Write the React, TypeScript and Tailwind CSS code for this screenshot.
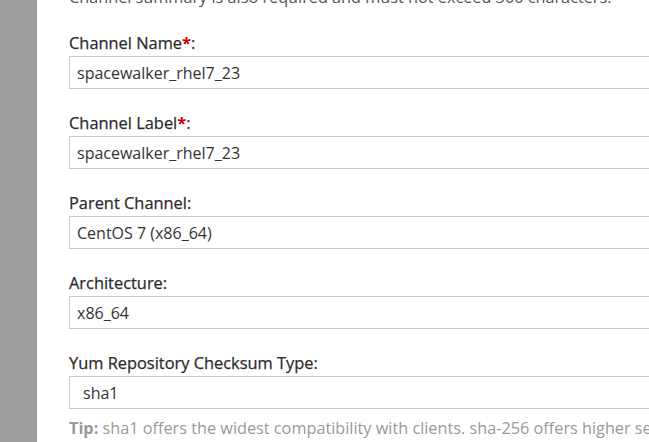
import React from "react";

function Label({ text, required }: { text: string; required?: boolean }) {
  return (
    <div className="text-[16.4px] leading-[20px] text-[#2b2b2b] mb-[3px] whitespace-nowrap [-webkit-text-stroke:0.25px_#2b2b2b]">
      {text}
      {required && <span className="text-[#c00] font-bold [-webkit-text-stroke:0px]">*</span>}:
    </div>
  );
}

function Field({ label, required, value }: { label: string; required?: boolean; value: string }) {
  return (
    <div className="mb-[24px]">
      <Label text={label} required={required} />
      <div className="h-[33px] w-[700px] border border-[#c8c8c8] bg-white flex items-center text-[16px] text-[#333] pl-[7px]">
        {value}
      </div>
    </div>
  );
}

export default function App() {
  return (
    <div className="w-[649px] h-[442px] overflow-hidden flex bg-white" style={{ fontFamily: '"Open Sans", sans-serif' }}>
      <div className="w-[37px] shrink-0 bg-[#9e9e9e]" />
      <div className="flex-1 pl-[32px] min-w-0">
        <div className="-mt-[14px] text-[16.25px] leading-[22px] text-[#555] whitespace-nowrap mb-[25px]">
          Channel summary is also required and must not exceed 300 characters.
        </div>
        <Field label="Channel Name" required value="spacewalker_rhel7_23" />
        <Field label="Channel Label" required value="spacewalker_rhel7_23" />
        <Field label="Parent Channel" value="CentOS 7 (x86_64)" />
        <Field label="Architecture" value="x86_64" />
        <Label text="Yum Repository Checksum Type" />
        <div className="h-[33px] w-[700px] border border-[#c8c8c8] bg-white flex items-center text-[16px] text-[#333] pl-[13px]">
          sha1
        </div>
        <div className="mt-[8px] text-[16.25px] leading-[22px] text-[#999] whitespace-nowrap">
          <span className="font-bold">Tip:</span> sha1 offers the widest compatibility with clients. sha-256 offers higher security
        </div>
      </div>
    </div>
  );
}
